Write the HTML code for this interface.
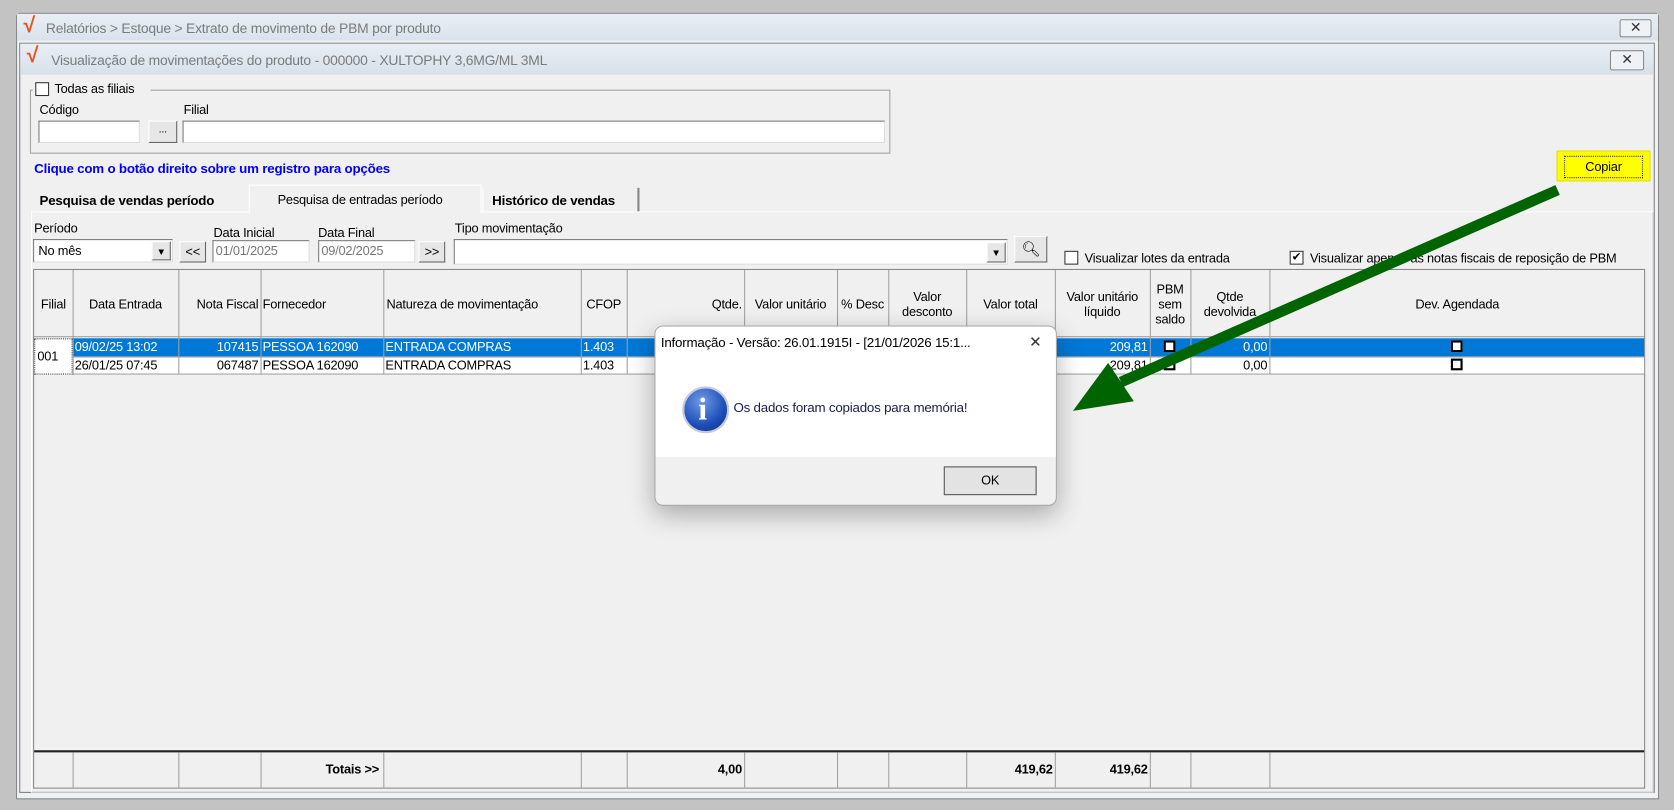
<!DOCTYPE html>
<html><head><meta charset="utf-8"><style>
html,body{margin:0;padding:0;width:1674px;height:810px;overflow:hidden;background:#c3c3c3}
#s{position:absolute;left:0;top:0;width:1568px;height:759px;transform:scale(1.06760,1.06720);transform-origin:0 0;font-family:"Liberation Sans",sans-serif;font-size:12px;letter-spacing:-0.2px;color:#000}
#s div{position:absolute;box-sizing:border-box}
.t{white-space:nowrap;line-height:14px}
.inp{background:#fff;border:1px solid #7a7a7a;border-right-color:#ddd;border-bottom-color:#ddd}
.btn{background:#e6e6e6;border:1px solid #fff;border-right-color:#666;border-bottom-color:#666;text-align:center;line-height:18px}
.cb{width:13px;height:13px;border:1px solid #333;background:#fff}
.vl{top:0;bottom:0;width:1px;background:#a0a0a0}
.hd{top:0;height:63px;display:flex;align-items:center;justify-content:center;text-align:center;line-height:14px}
.c{height:17px;line-height:17px;padding:0 2px;white-space:nowrap;overflow:hidden}
.r{text-align:right}
.wb{width:11px;height:11px;border:2px solid #000;background:#fff}
</style></head><body><div id="s">
<div style="left:15px;top:12px;width:1539px;height:737px;background:#eef1f5;border:1px solid #888;border-radius:4px 4px 0 0"></div>
<div style="left:16px;top:13px;width:1537px;height:25px;background:linear-gradient(#e9eef4,#d9e2ec)"></div>
<div class="t" style="left:22px;top:17px;color:#e8501c;font-size:20px;font-weight:bold">√</div>
<div class="t" style="left:43px;top:20px;color:#7b7b7b;font-size:13px">Relatórios &gt; Estoque &gt; Extrato de movimento de PBM por produto</div>
<div style="left:1517px;top:18px;width:30px;height:17px;border:1px solid #8a8a8a;border-radius:2px;background:#eef2f6;text-align:center;line-height:14px;color:#333;font-size:13px">✕</div>
<div style="left:18px;top:40px;width:1532px;height:703px;background:#f0f0f0;border:1px solid #7f7f7f"></div>
<div style="left:19px;top:41px;width:1530px;height:29px;background:linear-gradient(#e9eef4,#d7e0ea)"></div>
<div class="t" style="left:25px;top:45px;color:#e8501c;font-size:20px;font-weight:bold">√</div>
<div class="t" style="left:48px;top:50px;color:#7b7b7b;font-size:13px">Visualização de movimentações do produto - 000000 - XULTOPHY 3,6MG/ML 3ML</div>
<div style="left:1508px;top:47px;width:32px;height:19px;border:1px solid #8a8a8a;border-radius:2px;background:#eef2f6;text-align:center;line-height:16px;color:#333;font-size:13px">✕</div>
<div style="left:28px;top:84px;width:806px;height:60px;border:1px solid #a0a0a0"></div>
<div style="left:31px;top:76px;width:110px;height:14px;background:#f0f0f0"></div>
<div class="cb" style="left:33px;top:77px"></div>
<div class="t" style="left:51px;top:76px">Todas as filiais</div>
<div class="t" style="left:37px;top:96px">Código</div>
<div class="inp" style="left:36px;top:113px;width:95px;height:21px"></div>
<div class="btn" style="left:139px;top:113px;width:27px;height:21px;line-height:16px;font-size:10px">...</div>
<div class="t" style="left:172px;top:96px">Filial</div>
<div class="inp" style="left:171px;top:113px;width:658px;height:21px"></div>
<div class="t" style="left:32px;top:151px;color:#0000ff;font-weight:bold;font-size:12.5px">Clique com o botão direito sobre um registro para opções</div>
<div style="left:1458px;top:141px;width:88px;height:29px;background:#ffff00;border:1px solid #e0e000"></div>
<div style="left:1465px;top:146px;width:74px;height:21px;border:1px dotted #333;text-align:center;line-height:19px">Copiar</div>
<div style="left:29px;top:198px;width:1520px;height:545px;border:1px solid #c8c8c8;border-top-color:#fff;border-left-color:#fff"></div>
<div class="t" style="left:31px;top:176px;width:202px;height:22px;background:#f0f0f0;font-weight:bold;font-size:12.5px;padding:5px 0 0 6px"> Pesquisa de vendas período</div>
<div class="t" style="left:233px;top:173px;width:218px;height:27px;background:#f0f0f0;border:1px solid #fff;border-bottom:none;padding:6px 0 0 26px">Pesquisa de entradas período</div>
<div class="t" style="left:452px;top:176px;width:147px;height:22px;background:#f0f0f0;border-right:2px solid #888;border-left:1px solid #fff;font-weight:bold;font-size:12.5px;padding:5px 0 0 8px">Histórico de vendas</div>
<div class="t" style="left:32px;top:207px">Período</div>
<div class="inp" style="left:31px;top:224px;width:131px;height:22px;padding:3px 4px">No mês</div>
<div class="btn" style="left:142px;top:226px;width:18px;height:18px;font-size:9px">▼</div>
<div class="btn" style="left:168px;top:226px;width:25px;height:20px">&lt;&lt;</div>
<div class="t" style="left:200px;top:211px">Data Inicial</div>
<div class="inp" style="left:199px;top:225px;width:91px;height:21px;padding:2px 2px;color:#777">01/01/2025</div>
<div class="t" style="left:298px;top:211px">Data Final</div>
<div class="inp" style="left:298px;top:225px;width:91px;height:21px;padding:2px 2px;color:#777">09/02/2025</div>
<div class="btn" style="left:392px;top:226px;width:25px;height:20px">&gt;&gt;</div>
<div class="t" style="left:426px;top:207px">Tipo movimentação</div>
<div class="inp" style="left:425px;top:224px;width:519px;height:24px"></div>
<div class="btn" style="left:924px;top:227px;width:18px;height:19px;font-size:9px">▼</div>
<div class="btn" style="left:950px;top:221px;width:31px;height:25px;font-size:14px;line-height:22px">🔍︎</div>
<div class="cb" style="left:997px;top:235px"></div>
<div class="t" style="left:1016px;top:235px">Visualizar lotes da entrada</div>
<div class="cb" style="left:1208px;top:235px;font-size:11px;line-height:11px;text-align:center">✔</div>
<div class="t" style="left:1227px;top:235px">Visualizar apenas as notas fiscais de reposição de PBM</div>
<div style="left:31px;top:252px;width:1510px;height:487px;background:#f0f0f0;border:1px solid #888">
 <div style="left:0;top:0;right:0;height:63px;border-bottom:1px solid #a0a0a0"></div>
 <div class="hd" style="left:0;width:36px">Filial</div>
 <div class="hd" style="left:36px;width:99px">Data Entrada</div>
 <div class="hd" style="left:135px;width:77px;justify-content:flex-end;padding-right:2px">Nota Fiscal</div>
 <div class="hd" style="left:212px;width:115px;justify-content:flex-start;padding-left:2px">Fornecedor</div>
 <div class="hd" style="left:327px;width:185px;justify-content:flex-start;padding-left:3px">Natureza de movimentação</div>
 <div class="hd" style="left:512px;width:43px">CFOP</div>
 <div class="hd" style="left:555px;width:110px;justify-content:flex-end;padding-right:2px">Qtde.</div>
 <div class="hd" style="left:665px;width:87px">Valor unitário</div>
 <div class="hd" style="left:752px;width:48px">% Desc</div>
 <div class="hd" style="left:800px;width:73px">Valor<br>desconto</div>
 <div class="hd" style="left:873px;width:83px">Valor total</div>
 <div class="hd" style="left:956px;width:89px">Valor unitário<br>líquido</div>
 <div class="hd" style="left:1045px;width:38px">PBM<br>sem<br>saldo</div>
 <div class="hd" style="left:1083px;width:74px">Qtde<br>devolvida</div>
 <div class="hd" style="left:1157px;width:352px">Dev. Agendada</div>
 <div style="left:0;top:64px;width:36px;height:34px;background:#fff;border:1px dotted #444;line-height:32px;padding-left:2px">001</div>
 <div style="left:36px;top:64px;right:0;height:17px;background:#0078d7"></div>
 <div style="left:36px;top:81px;right:0;height:17px;background:#fff;border-bottom:1px solid #a0a0a0"></div>
 <div style="left:36px;top:81px;right:0;height:1px;background:#a0a0a0"></div>
 <div class="c" style="left:36px;top:64px;width:99px;color:#fff">09/02/25 13:02</div>
 <div class="c r" style="left:135px;top:64px;width:77px;color:#fff">107415</div>
 <div class="c" style="left:212px;top:64px;width:115px;color:#fff">PESSOA 162090</div>
 <div class="c" style="left:327px;top:64px;width:185px;color:#fff">ENTRADA COMPRAS</div>
 <div class="c" style="left:512px;top:64px;width:43px;color:#fff">1.403</div>
 <div class="c r" style="left:956px;top:64px;width:89px;color:#fff">209,81</div>
 <div class="wb" style="left:1058px;top:66px"></div>
 <div class="c r" style="left:1083px;top:64px;width:74px;color:#fff">0,00</div>
 <div class="wb" style="left:1327px;top:66px"></div>
 <div class="c" style="left:36px;top:81px;width:99px">26/01/25 07:45</div>
 <div class="c r" style="left:135px;top:81px;width:77px">067487</div>
 <div class="c" style="left:212px;top:81px;width:115px">PESSOA 162090</div>
 <div class="c" style="left:327px;top:81px;width:185px">ENTRADA COMPRAS</div>
 <div class="c" style="left:512px;top:81px;width:43px">1.403</div>
 <div class="c r" style="left:956px;top:81px;width:89px">209,81</div>
 <div class="wb" style="left:1058px;top:83px"></div>
 <div class="c r" style="left:1083px;top:81px;width:74px">0,00</div>
 <div class="wb" style="left:1327px;top:83px"></div>
 <div style="left:0;top:0;right:0;height:98px">
  <div class="vl" style="left:36px"></div><div class="vl" style="left:135px"></div><div class="vl" style="left:212px"></div><div class="vl" style="left:327px"></div><div class="vl" style="left:512px"></div><div class="vl" style="left:555px"></div><div class="vl" style="left:665px"></div><div class="vl" style="left:752px"></div><div class="vl" style="left:800px"></div><div class="vl" style="left:873px"></div><div class="vl" style="left:956px"></div><div class="vl" style="left:1045px"></div><div class="vl" style="left:1083px"></div><div class="vl" style="left:1157px"></div>
 </div>
 <div style="left:0;top:450px;right:0;height:2px;background:#222"></div>
 <div style="left:0;top:452px;right:0;height:34px">
  <div class="vl" style="left:36px"></div><div class="vl" style="left:135px"></div><div class="vl" style="left:212px"></div><div class="vl" style="left:327px"></div><div class="vl" style="left:512px"></div><div class="vl" style="left:555px"></div><div class="vl" style="left:665px"></div><div class="vl" style="left:752px"></div><div class="vl" style="left:800px"></div><div class="vl" style="left:873px"></div><div class="vl" style="left:956px"></div><div class="vl" style="left:1045px"></div><div class="vl" style="left:1083px"></div><div class="vl" style="left:1157px"></div>
  <div class="c r" style="left:212px;top:8px;width:113px;font-weight:bold">Totais &gt;&gt;</div>
  <div class="c r" style="left:555px;top:8px;width:110px;font-weight:bold">4,00</div>
  <div class="c r" style="left:873px;top:8px;width:83px;font-weight:bold">419,62</div>
  <div class="c r" style="left:956px;top:8px;width:89px;font-weight:bold">419,62</div>
 </div>
</div>
<div style="left:613px;top:305px;width:377px;height:169px;background:#f0f0f0;border:1px solid #aaa;border-radius:8px;box-shadow:0 8px 24px rgba(0,0,0,.3);overflow:hidden">
 <div style="left:0;top:0;width:375px;height:122px;background:#fff"></div>
 <div class="t" style="left:5px;top:8px;font-size:12.5px">Informação - Versão: 26.01.1915I - [21/01/2026 15:1...</div>
 <div class="t" style="left:350px;top:7px;font-size:14px;color:#333">✕</div>
 <div style="left:0;top:30px;width:375px;height:92px;background:#fff"></div>
 <div style="left:25px;top:56px;width:44px;height:44px;border-radius:50%;background:radial-gradient(circle at 40% 30%,#6f9be8,#1d4fb8 60%,#0b2f80);border:2px solid #c8c8d8"></div>
 <div class="t" style="left:40px;top:60px;color:#fff;font-weight:bold;font-size:30px;font-family:'Liberation Serif',serif;line-height:36px">i</div>
 <div class="t" style="left:73px;top:69px;color:#1c1c50;font-size:12.5px">Os dados foram copiados para memória!</div>
 <div style="left:270px;top:131px;width:87px;height:27px;background:#e3e3e3;border:1px solid #555;text-align:center;line-height:25px">OK</div>
</div>
<svg style="position:absolute;left:0;top:0" width="1568" height="759"><line x1="1459" y1="178" x2="1050" y2="358" stroke="#006400" stroke-width="10"/><polygon points="1005,385 1038,340 1062,376" fill="#006400"/></svg>
</div></body></html>
